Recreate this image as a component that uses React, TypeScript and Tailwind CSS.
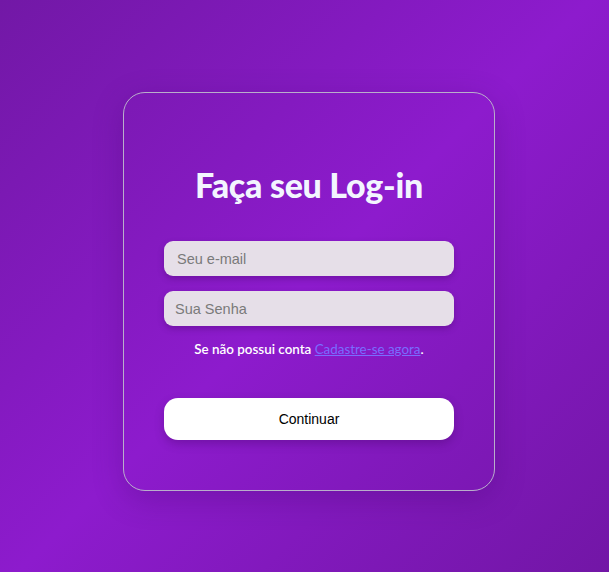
export default function App() {
  return (
    <div className="min-h-screen w-full bg-[linear-gradient(135deg,#7218a6_0%,#8d1bcd_50%,#7216a6_100%)] flex justify-center pl-[9px] pt-[92px]">
      <div className="w-[372px] h-[399px] rounded-[22px] border border-[#b9aecb] shadow-[0_8px_30px_rgba(60,0,100,0.25)] flex flex-col items-center px-[40px] pt-[71px]">
        <h1 className="text-[#f3f5ff] text-[34px] leading-[42px] font-black [font-family:Lato,sans-serif] tracking-[-0.3px]">
          Faça seu Log-in
        </h1>
        <form className="w-full mt-[35px] flex flex-col" onSubmit={(e) => e.preventDefault()}>
          <input
            type="email"
            placeholder="Seu e-mail"
            className="w-full h-[35px] rounded-[9px] bg-[#e6dfe8] pl-[13px] text-[14.5px] [font-family:'Liberation_Sans',Arial,sans-serif] placeholder:text-[#7a7a7a] shadow-[0_3px_6px_rgba(60,0,90,0.3)] outline-none"
          />
          <input
            type="password"
            placeholder="Sua Senha"
            className="w-full h-[35px] mt-[15px] rounded-[9px] bg-[#e6dfe8] pl-[11px] text-[14.5px] [font-family:'Liberation_Sans',Arial,sans-serif] placeholder:text-[#7a7a7a] shadow-[0_3px_6px_rgba(60,0,90,0.3)] outline-none"
          />
          <p className="mt-[13px] text-center text-white text-[13.4px] font-semibold [font-family:Lato,sans-serif]">
            Se não possui conta{" "}
            <a href="#" className="text-[#7a6cff] underline font-normal">
              Cadastre-se agora
            </a>
            .
          </p>
          <button
            type="submit"
            className="w-full h-[42px] mt-[39px] rounded-[14px] bg-white text-black text-[14px] [font-family:'Liberation_Sans',Arial,sans-serif] shadow-[0_4px_10px_rgba(60,0,90,0.3)]"
          >
            Continuar
          </button>
        </form>
      </div>
    </div>
  );
}
